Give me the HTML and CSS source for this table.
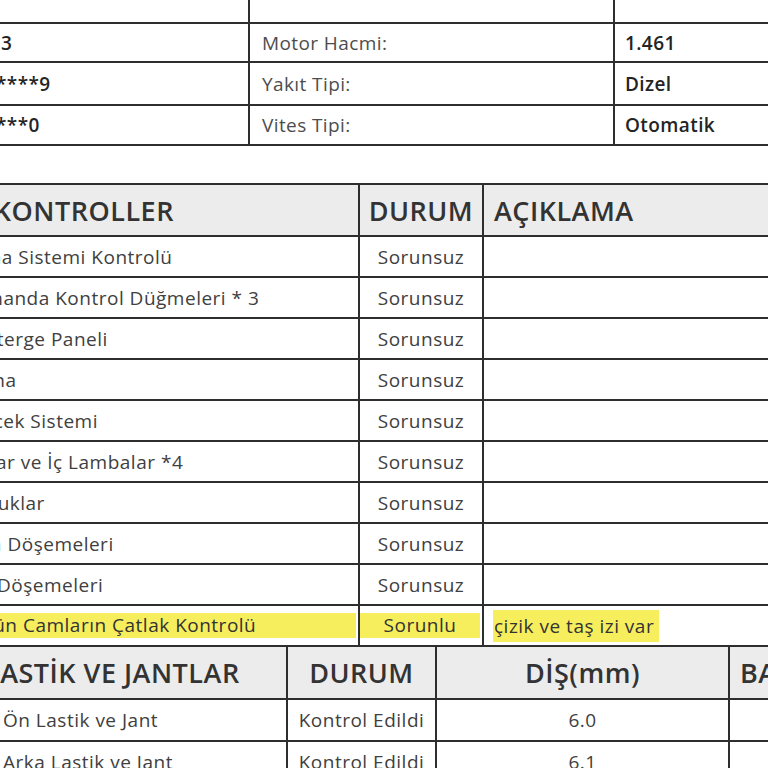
FILE: index.html
```html
<!DOCTYPE html>
<html lang="tr">
<head>
<meta charset="utf-8">
<title>Ekspertiz Raporu</title>
<link rel="stylesheet" href="styles.css">
</head>
<body>
<div class="sheet">
  <table class="info">
    <colgroup><col class="i-a"><col class="i-b"><col class="i-c"></colgroup>
    <tr class="r-top"><td></td><td></td><td></td></tr>
    <tr><td class="val first">34 AB 3</td><td class="lbl">Motor Hacmi:</td><td class="val">1.461</td></tr>
    <tr><td class="val first">*********9</td><td class="lbl">Yakıt Tipi:</td><td class="val">Dizel</td></tr>
    <tr><td class="val first">********0</td><td class="lbl">Vites Tipi:</td><td class="val">Otomatik</td></tr>
  </table>

  <table class="checks">
    <colgroup><col class="c-a"><col class="c-b"><col class="c-c"></colgroup>
    <tr class="head"><th class="name">İÇ KONTROLLER</th><th class="mid">DURUM</th><th class="desc">AÇIKLAMA</th></tr>
    <tr><td class="name">Klima Sistemi Kontrolü</td><td class="mid">Sorunsuz</td><td></td></tr>
    <tr><td class="name">Kumanda Kontrol Düğmeleri * 3</td><td class="mid">Sorunsuz</td><td></td></tr>
    <tr><td class="name">Gösterge Paneli</td><td class="mid">Sorunsuz</td><td></td></tr>
    <tr><td class="name">Korna</td><td class="mid">Sorunsuz</td><td></td></tr>
    <tr><td class="name">Silecek Sistemi</td><td class="mid">Sorunsuz</td><td></td></tr>
    <tr><td class="name">Farlar ve İç Lambalar *4</td><td class="mid">Sorunsuz</td><td></td></tr>
    <tr><td class="name">Koltuklar</td><td class="mid">Sorunsuz</td><td></td></tr>
    <tr><td class="name">Alan Döşemeleri</td><td class="mid">Sorunsuz</td><td></td></tr>
    <tr><td class="name">Yer Döşemeleri</td><td class="mid">Sorunsuz</td><td></td></tr>
    <tr class="warn"><td class="name"><div class="hl-block">Bütün Camların Çatlak Kontrolü</div></td><td class="mid"><div class="hl-block">Sorunlu</div></td><td class="desc"><span class="hl">çizik ve taş izi var</span></td></tr>
  </table>

  <table class="tires">
    <colgroup><col class="t-a"><col class="t-b"><col class="t-c"><col class="t-d"></colgroup>
    <tr class="head"><th class="name">LASTİK VE JANTLAR</th><th class="mid">DURUM</th><th class="mid">DİŞ(mm)</th><th class="last">BASINÇ</th></tr>
    <tr><td class="name">Ön Lastik ve Jant</td><td class="mid">Kontrol Edildi</td><td class="mid">6.0</td><td></td></tr>
    <tr><td class="name">Arka Lastik ve Jant</td><td class="mid">Kontrol Edildi</td><td class="mid">6.1</td><td></td></tr>
  </table>
</div>
</body>
</html>
```

FILE: styles.css
```css
html, body {
  margin: 0;
  padding: 0;
  background: #ffffff;
  overflow: hidden;
  width: 768px;
  height: 768px;
}

.sheet {
  width: 900px;
  margin-left: -60px;
  margin-top: -18px;
  display: flex;
  flex-direction: column;
  font-family: "Open Sans", "Noto Sans", sans-serif;
  color: #404040;
}

table {
  border-collapse: collapse;
  table-layout: fixed;
  width: 900px;
}

td, th {
  border: 2px solid #2e2e2e;
  padding: 0 10px;
  overflow: hidden;
  white-space: nowrap;
  text-align: left;
}

/* info table */
.info .i-a { width: 308px; }
.info .i-b { width: 365px; }
.info .i-c { width: 227px; }
.info tr { height: 41px; }
.info tr:nth-child(2) { height: 39px; }
.info tr:nth-child(3) { height: 43px; }
.info tr:nth-child(4) { height: 40px; }
.info td { font-size: 19px; letter-spacing: 0.4px; }
.info .r-top td { border-top: none; }
.info .lbl { padding-left: 12px; color: #4d4d4d; }
.info .val { font-weight: 600; color: #242424; padding-left: 10px; }
.info .val.first { padding-left: 0; }

/* checks table */
.checks { margin-top: 37px; }
.checks .c-a { width: 418px; }
.checks .c-b { width: 124px; }
.checks .c-c { width: 358px; }

.sheet tr.head { height: 52px; background: #ececec; }
.head th {
  font-size: 27px;
  font-weight: 600;
  color: #333333;
  letter-spacing: 0.5px;
}

.checks tr { height: 41px; }
.checks td { font-size: 19px; letter-spacing: 0.5px; }
.checks .name { padding-left: 19px; }
.checks th.name { padding-left: 18px; }
.checks .mid { text-align: center; padding: 0 4px; }
.checks .desc { padding-left: 10px; }

.warn td { padding-top: 0; padding-bottom: 0; }
.warn td.name, .warn td.mid { padding-left: 0; padding-right: 2px; }
.hl-block {
  background: #f7ee5e;
  height: 25px;
  line-height: 25px;
  color: #333333;
}
.warn td.name .hl-block { padding-left: 19px; }
.hl {
  background: #f7ee5e;
  color: #333333;
  padding: 3px 5px 3px 1px;
}
.warn td.desc { padding-left: 9px; }

/* tires table */
.tires .t-a { width: 346px; }
.tires .t-b { width: 149px; }
.tires .t-c { width: 293px; }
.tires .t-d { width: 112px; }
.tires .head th { border-top: none; }
.tires tr { height: 42px; }
.tires td { font-size: 19px; letter-spacing: 0.5px; }
.tires th.name { padding-left: 43px; }
.tires td.name { padding-left: 61px; }
.tires .mid { text-align: center; padding: 0 4px; }
.tires .last { padding-left: 10px; }
```
